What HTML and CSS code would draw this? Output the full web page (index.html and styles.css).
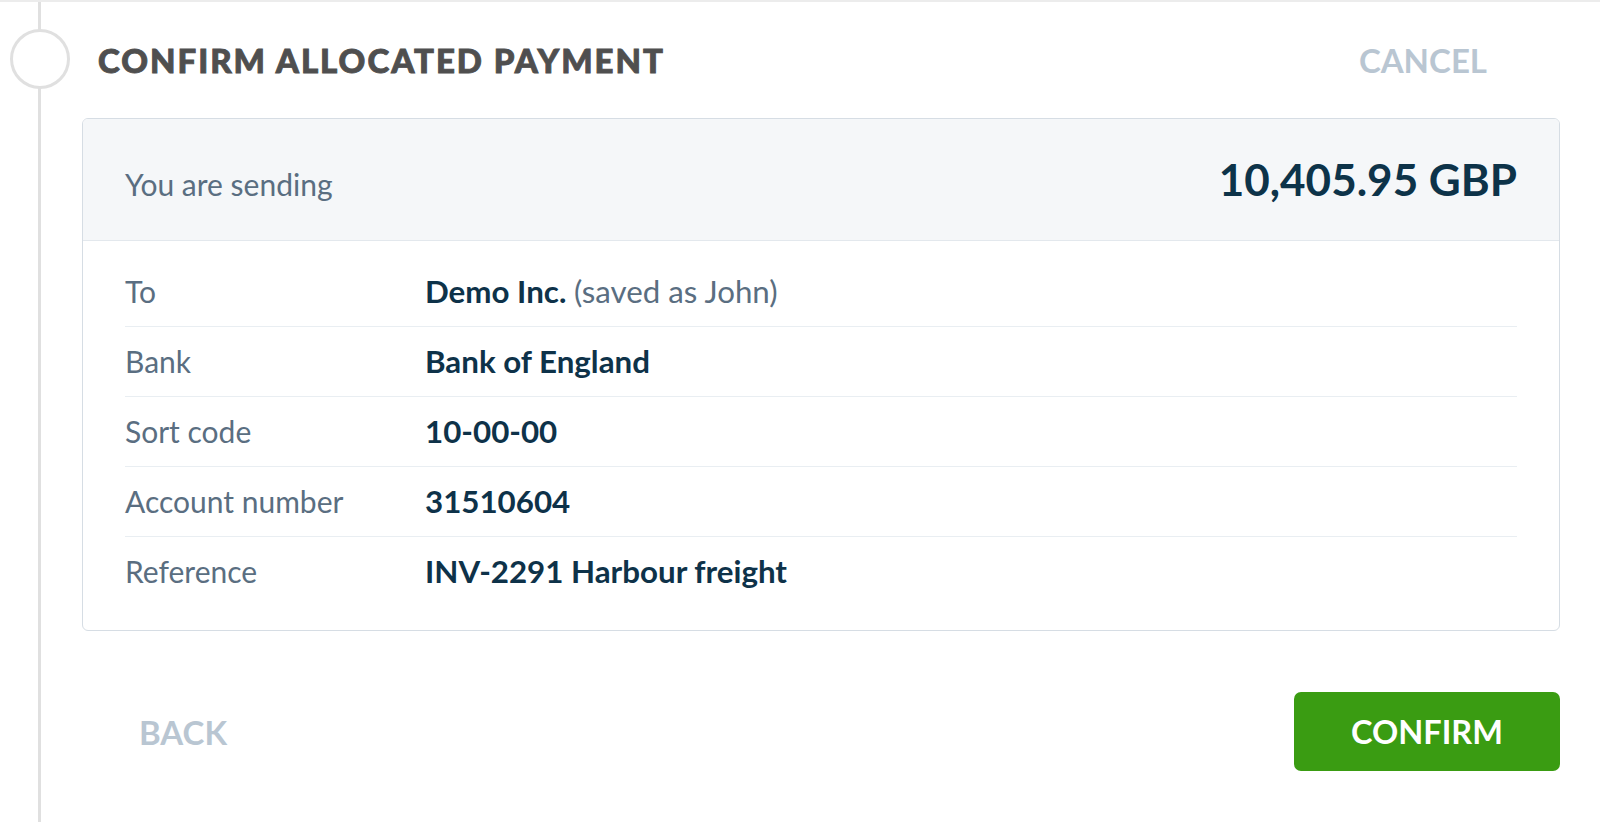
FILE: index.html
```html
<!DOCTYPE html>
<html lang="en">
<head>
<meta charset="utf-8">
<title>Confirm allocated payment</title>
<link rel="stylesheet" href="styles.css">
</head>
<body>
<div class="page">
  <div class="rail">
    <div class="node"></div>
  </div>
  <main class="step">
    <header class="step-head">
      <h1 class="step-title">CONFIRM ALLOCATED PAYMENT</h1>
      <button class="link-btn cancel">CANCEL</button>
    </header>
    <section class="card">
      <div class="card-head">
        <span class="sending-label">You are sending</span>
        <span class="amount">10,405.95 GBP</span>
      </div>
      <div class="card-body">
        <div class="row"><span class="label">To</span><span class="value">Demo Inc. <span class="muted">(saved as John)</span></span></div>
        <div class="row"><span class="label">Bank</span><span class="value">Bank of England</span></div>
        <div class="row"><span class="label">Sort code</span><span class="value">10-00-00</span></div>
        <div class="row"><span class="label">Account number</span><span class="value">31510604</span></div>
        <div class="row"><span class="label">Reference</span><span class="value">INV-2291 Harbour freight</span></div>
      </div>
    </section>
    <footer class="actions">
      <button class="link-btn back">BACK</button>
      <button class="primary-btn">CONFIRM</button>
    </footer>
  </main>
</div>
</body>
</html>
```
FILE: styles.css
```css
* { box-sizing: border-box; }
html, body { margin: 0; padding: 0; background: #fff; }
body {
  font-family: Lato, "Open Sans", "Liberation Sans", sans-serif;
  height: 822px;
  overflow: hidden;
}
.page {
  display: flex;
  border-top: 2px solid #ececec;
  height: 822px;
  padding-right: 40px;
}
.rail {
  width: 82px;
  flex: none;
  background: linear-gradient(#e0e0e0, #e0e0e0) no-repeat 38px 0 / 3px 100%;
}
.node {
  width: 60px;
  height: 60px;
  margin: 27px 0 0 10px;
  border: 3px solid #e0e0e0;
  border-radius: 50%;
  background: #fff;
}
.step { flex: 1; min-width: 0; }
.step-head {
  height: 116px;
  display: flex;
  align-items: center;
  justify-content: space-between;
  padding-bottom: 1px;
}
.step-title {
  margin: 0 0 0 16px;
  font-size: 33px;
  font-weight: 900;
  color: #4f4f4f;
  letter-spacing: 2px;
  -webkit-text-stroke: 0.9px #4f4f4f;
}
.link-btn {
  background: none;
  border: 0;
  font-family: inherit;
  font-size: 33px;
  font-weight: 700;
  color: #b9c6d2;
  cursor: pointer;
  padding: 0;
}
.cancel { margin-right: 73px; }
.back { margin-left: 57px; }
.card {
  border: 1px solid #d6dde4;
  border-radius: 6px;
  overflow: hidden;
}
.card-head {
  height: 122px;
  display: flex;
  justify-content: space-between;
  align-items: baseline;
  padding: 38px 42px 0;
  background: #f5f7f9;
  border-bottom: 1px solid #e3e8ed;
}
.sending-label {
  font-size: 30px;
  color: #5a6e81;
}
.amount {
  font-size: 44px;
  line-height: 1;
  font-weight: 700;
  color: #0d3349;
}
.card-body { padding: 16px 42px 24px; }
.row {
  display: flex;
  align-items: baseline;
  height: 70px;
  padding-top: 1px;
  line-height: 67px;
  border-bottom: 1px solid #e9eef2;
}
.row:last-child { border-bottom: 0; height: 69px; }
.label { width: 300px; flex: none; font-size: 30px; color: #5a6e81; }
.value { font-size: 31.3px; font-weight: 700; color: #0e3249; }
.muted { font-weight: 400; color: #5a6e81; }
.actions {
  margin-top: 61px;
  display: flex;
  align-items: center;
  justify-content: space-between;
}
.primary-btn {
  width: 266px;
  height: 79px;
  border: 0;
  border-radius: 7px;
  background: #3a9c12;
  color: #fff;
  font-family: inherit;
  font-size: 32.5px;
  font-weight: 700;
  cursor: pointer;
}
```
